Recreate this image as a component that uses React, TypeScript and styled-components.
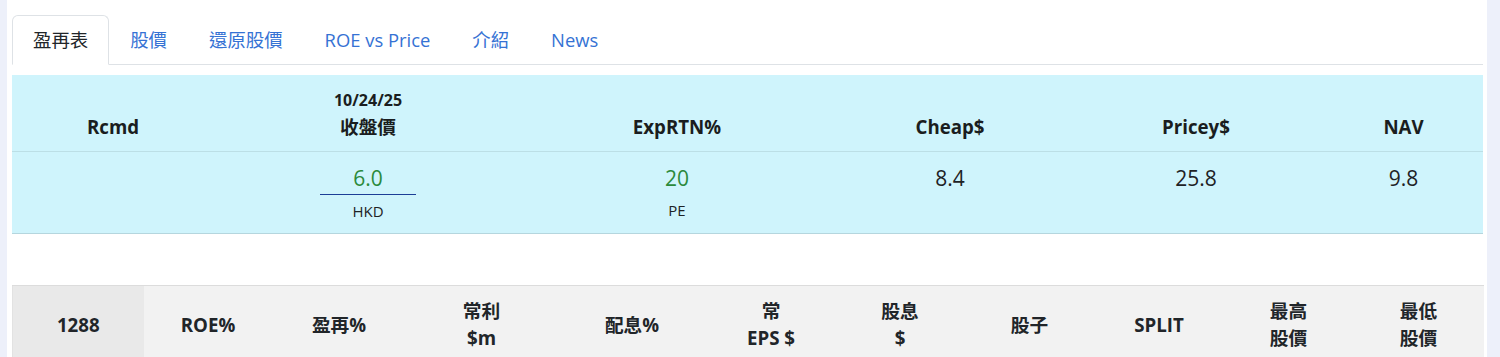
import React from "react";
import styled, { createGlobalStyle } from "styled-components";

const GlobalStyle = createGlobalStyle`
  html, body {
    margin: 0;
    padding: 0;
    background: #edf0fa;
  }
  body {
    font-family: "Open Sans", "Noto Sans CJK TC", sans-serif;
    color: #212529;
  }
`;

const Panel = styled.div`
  margin: 0 13px 0 7px;
  padding: 15px 4px 0 5px;
  background: #ffffff;
  min-height: 357px;
  box-sizing: border-box;
`;

const Tabs = styled.ul`
  display: flex;
  margin: 0;
  padding: 0;
  list-style: none;
  border-bottom: 1px solid #dee2e6;
`;

const Tab = styled.li<{ active?: boolean }>`
  margin-bottom: -1px;
  padding: 10px 20px;
  font-size: 18.4px;
  line-height: 28px;
  border: 1px solid ${(p) => (p.active ? "#dee2e6" : "transparent")};
  border-bottom-color: ${(p) => (p.active ? "#ffffff" : "transparent")};
  border-radius: 6px 6px 0 0;
  background: ${(p) => (p.active ? "#ffffff" : "transparent")};
  color: ${(p) => (p.active ? "#212529" : "#3572d4")};
  cursor: pointer;
`;

const Table = styled.table`
  width: 100%;
  border-collapse: collapse;
  table-layout: fixed;
`;

const SummaryTable = styled(Table)`
  margin-top: 10px;
  background: #cff4fc;
  color: #1a1d20;
`;

const HeadCell = styled.th`
  padding: 13px 8px 10px;
  vertical-align: bottom;
  text-align: center;
  font-size: 18.7px;
  font-weight: 700;
  line-height: 28px;
  border-bottom: 1px solid #bcdfe6;
`;

const DateLine = styled.div`
  font-size: 16px;
  line-height: 25px;
`;

const BodyCell = styled.td`
  padding: 11px 8px 11px;
  vertical-align: top;
  text-align: center;
  border-bottom: 1px solid #b5d6de;
`;

const Value = styled.div<{ good?: boolean }>`
  font-size: 21px;
  line-height: 31px;
  color: ${(p) => (p.good ? "#2b8a3b" : "#1e2225")};
`;

const PriceValue = styled(Value)`
  width: 96px;
  margin: 0 auto;
  border-bottom: 1px solid #1c3d96;
`;

const Unit = styled.div`
  margin-top: 5px;
  font-size: 15px;
  line-height: 22px;
  color: #1e2225;
`;

const Spacer = styled.div`
  height: 51px;
`;

const DataTable = styled(Table)`
  border-top: 1px solid #dcdcdc;
  border-left: 1px solid #e2e2e2;
`;

const DataHead = styled.th<{ first?: boolean }>`
  padding: 11px 6px 12px;
  vertical-align: middle;
  text-align: center;
  font-size: 18.7px;
  font-weight: 700;
  line-height: 27px;
  color: #212529;
  background: ${(p) => (p.first ? "#e9e9e9" : "#f2f2f2")};
`;

const tabs = ["盈再表", "股價", "還原股價", "ROE vs Price", "介紹", "News"];

const summaryWidths = [202, 308, 310, 236, 256, 159];

const dataCols: { label: React.ReactNode; width: number }[] = [
  { label: "1288", width: 131 },
  { label: "ROE%", width: 129 },
  { label: "盈再%", width: 133 },
  { label: <>常利<br />$m</>, width: 152 },
  { label: "配息%", width: 149 },
  { label: <>常<br />EPS $</>, width: 129 },
  { label: <>股息<br />$</>, width: 129 },
  { label: "股子", width: 130 },
  { label: "SPLIT", width: 129 },
  { label: <>最高<br />股價</>, width: 130 },
  { label: <>最低<br />股價</>, width: 130 },
];

export default function App() {
  return (
    <>
      <GlobalStyle />
      <Panel>
        <Tabs>
          {tabs.map((t, i) => (
            <Tab key={t} active={i === 0}>
              {t}
            </Tab>
          ))}
        </Tabs>

        <SummaryTable>
          <colgroup>
            {summaryWidths.map((w, i) => (
              <col key={i} style={{ width: w }} />
            ))}
          </colgroup>
          <thead>
            <tr>
              <HeadCell>Rcmd</HeadCell>
              <HeadCell>
                <DateLine>10/24/25</DateLine>
                收盤價
              </HeadCell>
              <HeadCell>ExpRTN%</HeadCell>
              <HeadCell>Cheap$</HeadCell>
              <HeadCell>Pricey$</HeadCell>
              <HeadCell>NAV</HeadCell>
            </tr>
          </thead>
          <tbody>
            <tr>
              <BodyCell />
              <BodyCell>
                <PriceValue good>6.0</PriceValue>
                <Unit>HKD</Unit>
              </BodyCell>
              <BodyCell>
                <Value good>20</Value>
                <Unit>PE</Unit>
              </BodyCell>
              <BodyCell>
                <Value>8.4</Value>
              </BodyCell>
              <BodyCell>
                <Value>25.8</Value>
              </BodyCell>
              <BodyCell>
                <Value>9.8</Value>
              </BodyCell>
            </tr>
          </tbody>
        </SummaryTable>

        <Spacer />

        <DataTable>
          <colgroup>
            {dataCols.map((c, i) => (
              <col key={i} style={{ width: c.width }} />
            ))}
          </colgroup>
          <thead>
            <tr>
              {dataCols.map((c, i) => (
                <DataHead key={i} first={i === 0}>
                  {c.label}
                </DataHead>
              ))}
            </tr>
          </thead>
        </DataTable>
      </Panel>
    </>
  );
}
